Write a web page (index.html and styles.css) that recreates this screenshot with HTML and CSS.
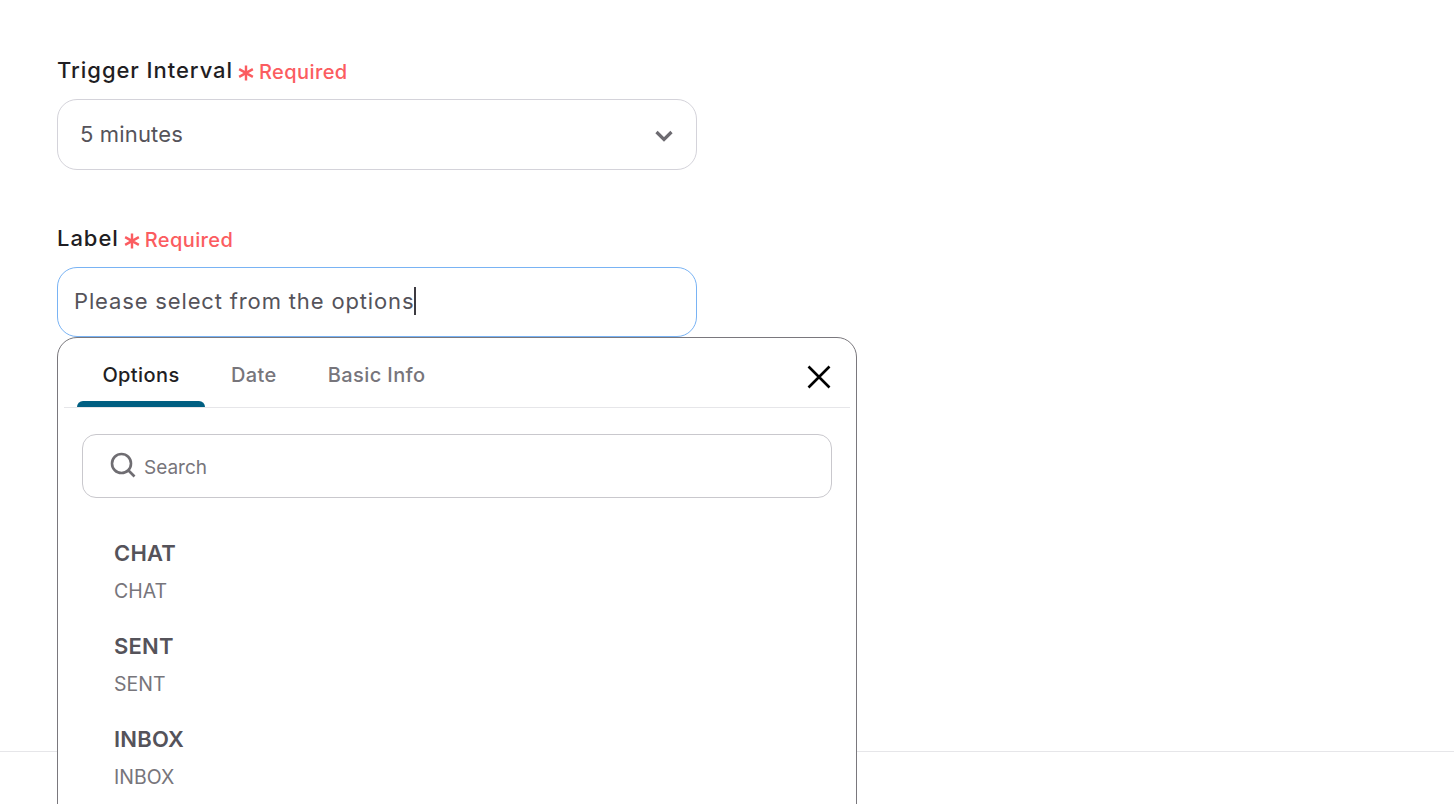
FILE: index.html
```html
<!DOCTYPE html>
<html lang="en">
<head>
<meta charset="utf-8">
<title>Trigger settings</title>
<link rel="stylesheet" href="styles.css">
</head>
<body>
<main class="page">
  <form class="form">
    <div class="field">
      <div class="label-row">
        <span class="label">Trigger Interval</span>
        <svg class="asterisk" viewBox="0 0 14 14"><path d="M7 .5v13M1 3.6 13 10.4M13 3.6 1 10.4"/></svg>
        <span class="required">Required</span>
      </div>
      <div class="select">
        <span>5 minutes</span>
        <svg class="chevron" viewBox="0 0 18 12"><path d="M1.5 2 9 9.5 16.5 2"/></svg>
      </div>
    </div>
    <div class="field field-label">
      <div class="label-row">
        <span class="label">Label</span>
        <svg class="asterisk" viewBox="0 0 14 14"><path d="M7 .5v13M1 3.6 13 10.4M13 3.6 1 10.4"/></svg>
        <span class="required">Required</span>
      </div>
      <div class="input"><span>Please select from the options</span><i class="caret"></i></div>
      <div class="popover">
        <div class="tabs">
          <span class="tab active">Options</span>
          <span class="tab tab-date">Date</span>
          <span class="tab tab-basic">Basic Info</span>
          <svg class="close" viewBox="0 0 24 24"><path d="M1.5 1.5 22.5 22.5M22.5 1.5 1.5 22.5"/></svg>
        </div>
        <div class="search">
          <svg class="search-icon" viewBox="0 0 26 26"><circle cx="11.5" cy="11.5" r="9.5"/><path d="M18.5 18.5 24.5 24.5"/></svg>
          <span>Search</span>
        </div>
        <ul class="options">
          <li><strong>CHAT</strong><span>CHAT</span></li>
          <li><strong>SENT</strong><span>SENT</span></li>
          <li><strong>INBOX</strong><span>INBOX</span></li>
        </ul>
      </div>
    </div>
  </form>
  <div class="footer-line"></div>
</main>
</body>
</html>
```
FILE: styles.css
```css
* { box-sizing: border-box; }
html, body { margin: 0; height: 100%; overflow: hidden; background: #fff; }
body { font-family: Inter, "Liberation Sans", sans-serif; color: #4f4d55; }
.page { height: 804px; display: flex; flex-direction: column; overflow: hidden; }
.form { padding: 55px 0 0 57px; height: 695px; flex: none; }
.field { width: 640px; position: relative; }
.field-label { margin-top: 53px; }
.label-row { display: flex; align-items: center; height: 30px; margin-bottom: 14px; }
.label { font-size: 22px; font-weight: 500; color: #1f1e23; letter-spacing: 0.95px; }
.asterisk { width: 16px; height: 16px; margin: 5px 5px 0 5px; fill: none; stroke: #fb5c60; stroke-width: 2.1; }
.required { font-size: 20px; font-weight: 500; color: #fb5c60; letter-spacing: 0.4px; margin-top: 3px; }
.select, .input { height: 71px; border: 1px solid #d4d3da; border-radius: 20px; display: flex; align-items: center; font-size: 22px; background: #fff; color: #55535a; }
.select { padding: 0 22px 2px; justify-content: space-between; letter-spacing: 0.15px; }
.chevron { width: 18px; height: 12px; margin: 5px 1px 0 0; fill: none; stroke: #6d6b71; stroke-width: 3.2; }
.input { border-color: #79b3f4; height: 70px; padding: 0 0 2px 16px; letter-spacing: 0.85px; }
.caret { width: 2px; height: 28px; background: #3d3b41; margin-left: 0; }
.popover { position: absolute; left: 0; top: 114px; width: 800px; height: 600px; background: #fff; border: 1px solid #7a787d; border-radius: 20px; padding: 0 6px; }
.tabs { height: 70px; border-bottom: 1px solid #e6e6e9; display: flex; position: relative; align-items: flex-start; }
.tab { font-size: 20px; font-weight: 500; color: #77757b; letter-spacing: 0.4px; padding-top: 25px; }
.tab.active { color: #1f1e23; width: 128px; margin-left: 13px; text-align: center; height: 69px; position: relative; }
.tab.active::after { content: ""; position: absolute; left: 0; right: 0; bottom: 0; height: 6px; background: #005f82; border-radius: 6px 6px 0 0; }
.tab-date { margin-left: 26px; }
.tab-basic { margin-left: 51px; }
.close { position: absolute; right: 19px; top: 27px; width: 24px; height: 24px; fill: none; stroke: #000; stroke-width: 2.6; }
.search { margin: 26px 18px 0; height: 64px; border: 1px solid #c9c8cd; border-radius: 14px; display: flex; align-items: center; padding-left: 27px; font-size: 19px; color: #77757b; }
.search-icon { width: 26px; height: 26px; fill: none; stroke: #6f6d72; stroke-width: 2.6; margin-right: 8px; margin-top: -3px; }
.search span { margin-top: 2px; }
.options { list-style: none; margin: 40px 0 0; padding: 0 0 0 50px; display: flex; flex-direction: column; gap: 27px; }
.options li { display: flex; flex-direction: column; gap: 10px; }
.options strong { font-size: 22px; font-weight: 600; line-height: 30px; color: #55535a; letter-spacing: 0.2px; }
.options span { font-size: 19.5px; line-height: 26px; color: #77757b; }
.footer-line { height: 1px; margin-top: 56px; flex: none; background: #e6e6e9; }
```
